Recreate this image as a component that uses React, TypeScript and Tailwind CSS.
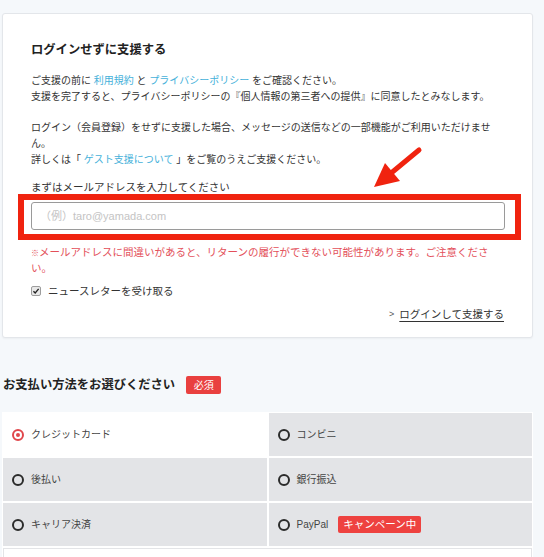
import React from 'react';

const font = "font-['Liberation_Sans','Noto_Sans_CJK_JP',sans-serif]";

const Radio = ({ checked }: { checked?: boolean }) =>
  checked ? (
    <span className="flex h-[12px] w-[12px] shrink-0 items-center justify-center rounded-full border-[2px] border-[#e0474c]">
      <span className="h-[4px] w-[4px] rounded-full bg-[#e0474c]" />
    </span>
  ) : (
    <span className="h-[12px] w-[12px] shrink-0 rounded-full border-[2px] border-[#2b2b2b]" />
  );

const PayOption = ({
  label,
  checked,
  badge,
}: {
  label: string;
  checked?: boolean;
  badge?: string;
}) => (
  <div
    className={`flex h-[43px] items-center gap-[7px] pl-[9px] ${checked ? 'bg-white' : 'bg-[#e3e4e7]'}`}
  >
    <Radio checked={checked} />
    <span className="text-[10px] leading-[16px] text-[#444]">{label}</span>
    {badge && (
      <span className="ml-[3px] flex h-[17px] items-center rounded-[2px] bg-[#ee4240] px-[5px] text-[10.5px] text-white">
        {badge}
      </span>
    )}
  </div>
);

export default function App() {
  return (
    <div className={`relative h-[557px] w-[544px] overflow-hidden bg-[#f5f8fb] px-[2px] pt-[13px] ${font}`}>
      {/* login card */}
      <div className="w-[531px] rounded-[3px] border border-[#e3e6ea] bg-white pb-[15px] pl-[28px] pr-[28px] pt-[27px] shadow-[0_1px_2px_rgba(0,0,0,0.04)]">
        <h2 className="text-[12.3px] font-bold leading-[18px] text-[#222]">ログインせずに支援する</h2>

        <p className="mt-[14px] text-[10px] leading-[16px] text-[#333]">
          ご支援の前に <span className="text-[#45b1da]">利用規約</span> と{' '}
          <span className="text-[#45b1da]">プライバシーポリシー</span> をご確認ください。
          <br />
          支援を完了すると、プライバシーポリシーの『個人情報の第三者への提供』に同意したとみなします。
        </p>

        <p className="mt-[15px] text-[10px] leading-[16px] text-[#333]">
          ログイン（会員登録）をせずに支援した場合、メッセージの送信などの一部機能がご利用いただけませ
          <br />
          ん。
          <br />
          詳しくは「 <span className="text-[#45b1da]">ゲスト支援について</span> 」をご覧のうえご支援ください。
        </p>

        <p className="mt-[11px] text-[10.5px] leading-[16px] text-[#333]">まずはメールアドレスを入力してください</p>

        <div className="relative mt-[7px] w-[474px]">
          <div className="flex h-[28px] items-center rounded-[3px] border border-[#9a9a9a] bg-white pl-[8px] text-[11px] text-[#c4c4c4]">
            （例）taro@yamada.com
          </div>
          {/* annotation frame */}
          <div className="pointer-events-none absolute bottom-[-10px] left-[-13px] right-[-16px] top-[-8px] border-[6px] border-[#f0230f]" />
        </div>

        <p className="mt-[15px] text-[10.5px] leading-[15px] text-[#e3505a]">
          <span className="text-[8px]">※</span>メールアドレスに間違いがあると、リターンの履行ができない可能性があります。ご注意くださ
          <br />
          い。
        </p>

        <label className="mt-[7px] flex items-center gap-[7px] text-[10.5px] leading-[16px] text-[#333]">
          <span className="flex h-[10px] w-[10px] items-center justify-center rounded-[2px] border border-[#9d9d9d] bg-[#e8e8e8]">
            <svg viewBox="0 0 10 10" className="h-[8px] w-[8px]">
              <path d="M1.8 5.2 L4 7.4 L8.3 2.4" fill="none" stroke="#222" strokeWidth="1.7" />
            </svg>
          </span>
          ニュースレターを受け取る
        </label>

        <div className="mt-[7px] flex justify-end pr-[0px] text-[10.5px] leading-[16px] text-[#333]">
          <span className="mr-[5px] text-[9px] text-[#555]">&gt;</span>
          <span className="underline underline-offset-[3px]">ログインして支援する</span>
        </div>
      </div>

      {/* payment */}
      <div className="mt-[38px] flex items-center gap-[11px] pl-[1px]">
        <h2 className="text-[12.3px] font-bold leading-[18px] text-[#222]">お支払い方法をお選びください</h2>
        <span className="flex h-[18px] w-[35px] items-center justify-center rounded-[2px] bg-[#e9403f] text-[10px] text-white">
          必須
        </span>
      </div>

      <div className="mt-[18px] grid w-[531px] grid-cols-2 gap-[2px] bg-white p-[1px]">
        <PayOption label="クレジットカード" checked />
        <PayOption label="コンビニ" />
        <PayOption label="後払い" />
        <PayOption label="銀行振込" />
        <PayOption label="キャリア決済" />
        <PayOption label="PayPal" badge="キャンペーン中" />
        <div className="col-span-2 h-[43px] border border-[#e3e4e7] bg-white" />
      </div>

      {/* annotation arrow */}
      <svg className="pointer-events-none absolute left-0 top-0" width="544" height="557">
        <line x1="419" y1="150" x2="390" y2="174" stroke="#f0230f" strokeWidth="5" strokeLinecap="round" />
        <polygon points="374,187 385,163 400,181" fill="#f0230f" />
      </svg>
    </div>
  );
}
